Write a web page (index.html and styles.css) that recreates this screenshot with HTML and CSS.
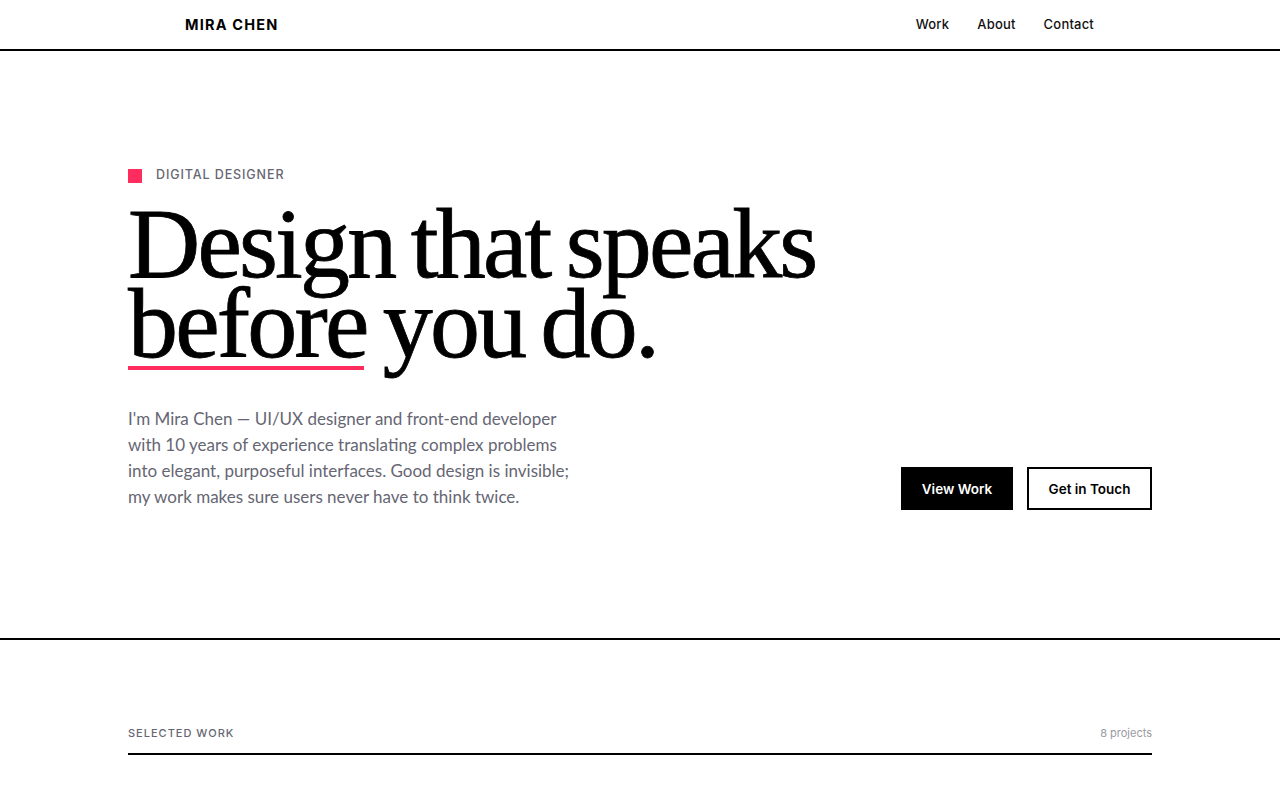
FILE: index.html
```html
<!DOCTYPE html>
<html lang="en">
<head>
<meta charset="utf-8">
<title>Mira Chen</title>
<link rel="stylesheet" href="styles.css">
</head>
<body>
<header class="nav">
  <div class="nav-inner">
    <a class="logo" href="#">MIRA CHEN</a>
    <nav class="links">
      <a href="#">Work</a>
      <a href="#">About</a>
      <a href="#">Contact</a>
    </nav>
  </div>
</header>
<section class="hero">
  <div class="container">
    <div class="eyebrow"><span class="square"></span><span>DIGITAL DESIGNER</span></div>
    <h1 class="title">Design that speaks<br><span class="mark">before</span> you do.</h1>
    <div class="hero-bottom">
      <p class="intro">I'm Mira Chen — UI/UX designer and front-end developer with 10 years of experience translating complex problems into elegant, purposeful interfaces. Good design is invisible; my work makes sure users never have to think twice.</p>
      <div class="actions">
        <a class="btn btn-dark" href="#">View Work</a>
        <a class="btn btn-light" href="#">Get in Touch</a>
      </div>
    </div>
  </div>
</section>
<section class="work">
  <div class="container">
    <div class="work-head">
      <span class="work-label">SELECTED WORK</span>
      <span class="work-count">8 projects</span>
    </div>
  </div>
</section>
</body>
</html>
```
FILE: styles.css
```css
* { box-sizing: border-box; }
html, body { margin: 0; padding: 0; background: #fff; }
body { font-family: Inter, "Open Sans", sans-serif; color: #000; }
a { text-decoration: none; color: inherit; }

.nav { border-bottom: 2px solid #000; height: 51px; }
.nav-inner {
  height: 48px;
  display: flex;
  align-items: center;
  justify-content: space-between;
  padding: 0 186px 0 185px;
}
.logo { font-size: 14.5px; font-weight: 700; letter-spacing: 1.2px; }
.links { display: flex; gap: 28px; font-size: 13px; font-weight: 500; letter-spacing: 0.2px; color: #111; }

.container { width: 1024px; margin: 0 auto; }

.hero { border-bottom: 2px solid #000; height: 589px; padding-top: 115px; }
.eyebrow { display: flex; align-items: center; gap: 14px; font-size: 12.5px; letter-spacing: 0.9px; color: #666673; font-weight: 500; height: 16px; }
.square { width: 14px; height: 14px; background: #ff2d5e; display: block; margin-top: 4px; }

.title {
  margin: 22px 0 0;
  font-family: "Liberation Serif", "DejaVu Serif", serif;
  font-weight: 400;
  font-size: 100px;
  line-height: 80px;
  letter-spacing: -2.8px;
  word-spacing: -6px;
  -webkit-text-stroke: 0.8px #000;
}
.mark { display: inline-block; position: relative; }
.mark::after { content: ""; position: absolute; left: 0; right: 3px; bottom: -6px; height: 4px; background: #ff2d5e; }

.hero-bottom { display: flex; justify-content: space-between; align-items: flex-end; margin-top: 42px; }
.intro { margin: 0; width: 450px; font-family: Lato, Inter, sans-serif; font-size: 17px; line-height: 26px; color: #666673; }
.actions { display: flex; gap: 14px; }
.btn { display: flex; align-items: center; justify-content: center; height: 43px; font-size: 13.5px; font-weight: 600; border: 2px solid #000; }
.btn-dark { background: #000; color: #fff; width: 112px; }
.btn-light { background: #fff; color: #000; width: 125px; }

.work { padding-top: 86px; }
.work-head { display: flex; justify-content: space-between; align-items: center; border-bottom: 2px solid #000; padding-bottom: 13px; }
.work-label { font-size: 11px; letter-spacing: 1px; color: #666673; font-weight: 500; }
.work-count { font-size: 11px; color: #9a9aa3; }
```
